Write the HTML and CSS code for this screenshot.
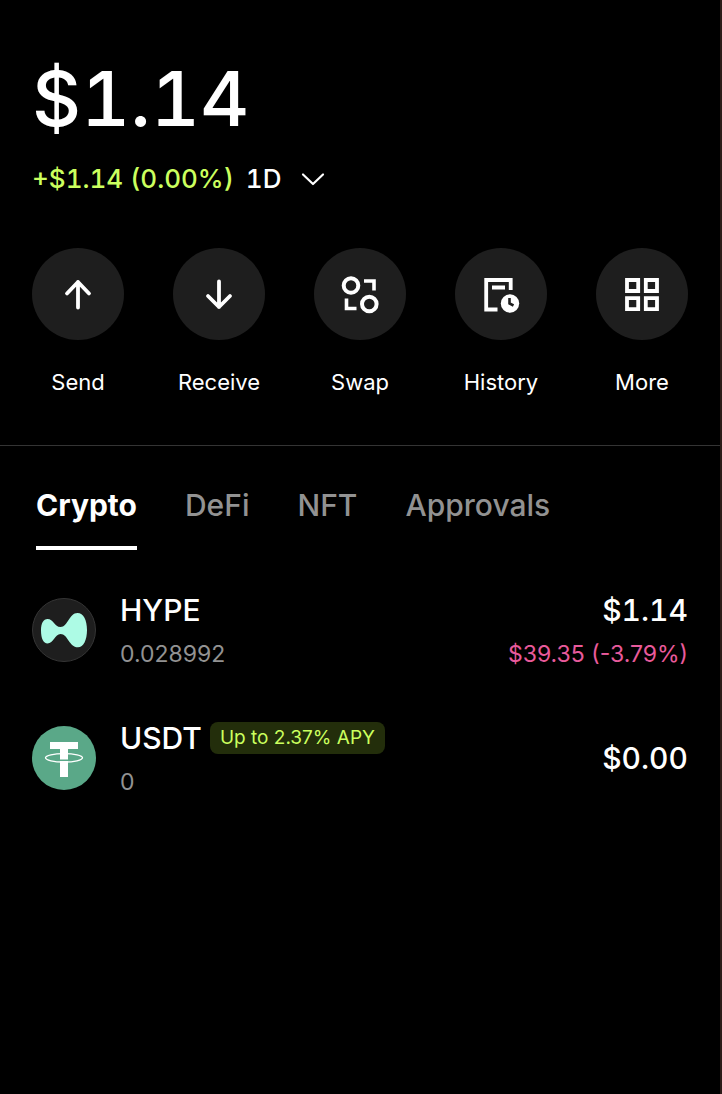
FILE: index.html
```html
<!DOCTYPE html>
<html lang="en">

<head>
    <meta charset="UTF-8">
    <meta name="viewport" content="width=device-width, initial-scale=1.0">
    <title>Wallet</title>
    <link rel="stylesheet" href="styles.css">
</head>

<body>
    <main class="wallet">
        <!--balance-->
        <section class="balance">
            <h1 class="total">$1.14</h1>
            <div class="change">
                <span class="change-value">+$1.14 (0.00%)</span>
                <button type="button" class="period">
                    1D
                    <svg width="24" height="24" viewBox="0 0 24 24" fill="none" stroke="currentColor" stroke-width="2.200" stroke-linecap="round" stroke-linejoin="round" aria-hidden="true">
                        <path d="M2 7.500l10 9.500 10-9.500" />
                    </svg>
                </button>
            </div>
        </section>

        <!--actions-->
        <nav class="actions">
            <button type="button" class="action">
                <span class="circle">
                    <svg width="40" height="40" viewBox="0 0 40 40" fill="none" stroke="currentColor" stroke-width="3.800" stroke-linecap="round" stroke-linejoin="round" aria-hidden="true">
                        <path d="M20 33.500V8M9 19.500L20 8l11 11.500" />
                    </svg>
                </span>
                <span>Send</span>
            </button>
            <button type="button" class="action">
                <span class="circle">
                    <svg width="40" height="40" viewBox="0 0 40 40" fill="none" stroke="currentColor" stroke-width="3.800" stroke-linecap="round" stroke-linejoin="round" aria-hidden="true">
                        <path d="M20 7.500V33M9 22l11 11 11-11" />
                    </svg>
                </span>
                <span>Receive</span>
            </button>
            <button type="button" class="action">
                <span class="circle">
                    <svg width="40" height="40" viewBox="0 0 40 40" fill="none" stroke="currentColor" stroke-width="4" aria-hidden="true">
                        <circle cx="11" cy="11.500" r="7.300" />
                        <circle cx="29.300" cy="30" r="7.300" />
                        <path d="M24 7h10v9.500M6.500 24.500V34.500h10" stroke-width="3.600" />
                    </svg>
                </span>
                <span>Swap</span>
            </button>
            <button type="button" class="action">
                <span class="circle">
                    <svg width="40" height="40" viewBox="0 0 40 40" fill="none" stroke="currentColor" stroke-width="4" aria-hidden="true">
                        <path d="M16.500 35.500H5.200V6h24.500v10M11 13.500h13" stroke-width="3.800" />
                        <circle cx="29" cy="29.500" r="9.200" fill="currentColor" stroke="none" />
                        <path d="M28.500 24v5.500l4 2" stroke="#1e1e1e" stroke-width="2.600" />
                    </svg>
                </span>
                <span>History</span>
            </button>
            <button type="button" class="action">
                <span class="circle">
                    <svg width="40" height="40" viewBox="0 0 40 40" fill="none" stroke="currentColor" stroke-width="3.800" aria-hidden="true">
                        <path d="M5 6h11.200v11H5zM23.800 6H35v11H23.800zM5 24.200h11.200v11H5zM23.800 24.200H35v11H23.800z" />
                    </svg>
                </span>
                <span>More</span>
            </button>
        </nav>

        <!--tabs-->
        <div class="tabs" role="tablist">
            <button type="button" class="tab active" role="tab" aria-selected="true">Crypto</button>
            <button type="button" class="tab" role="tab" aria-selected="false">DeFi</button>
            <button type="button" class="tab" role="tab" aria-selected="false">NFT</button>
            <button type="button" class="tab" role="tab" aria-selected="false">Approvals</button>
        </div>

        <!--token list-->
        <ul class="tokens">
            <li class="token">
                <svg class="logo" viewBox="0 0 64 64" aria-hidden="true">
                    <circle cx="32" cy="32" r="31.500" fill="#1e1e1e" stroke="#353535" />
                    <path fill="#adfbe5" d="M9 32.500C9 25 11.500 21 15.500 21C21.500 21 22.500 29 28.500 29C36 29 37 15 45.500 15C51.500 15 55 22 55 32C55 42 51.500 49.300 46 49.300C37 49.300 36 36 28.500 36C23 36 21.500 45.500 15.500 45.500C11.500 45.500 9 40.500 9 32.500Z" />
                </svg>
                <div class="info">
                    <div class="name">HYPE</div>
                    <div class="amount">0.028992</div>
                </div>
                <div class="value">
                    <div class="name">$1.14</div>
                    <div class="amount down">$39.35 (-3.79%)</div>
                </div>
            </li>
            <li class="token">
                <svg class="logo" viewBox="0 0 64 64" aria-hidden="true">
                    <circle cx="32" cy="32" r="32" fill="#5aa888" />
                    <path fill="#fff" d="M18 16h28v7H36v10.500h-8V23H18zM28 35h8v16h-8z" />
                    <ellipse cx="32" cy="31.800" rx="18.500" ry="4.200" fill="none" stroke="#fff" stroke-width="1.300" />
                </svg>
                <div class="info">
                    <div class="name">USDT <span class="apy">Up to 2.37% APY</span></div>
                    <div class="amount">0</div>
                </div>
                <div class="value">
                    <div class="name">$0.00</div>
                </div>
            </li>
        </ul>
    </main>
</body>

</html>
```
FILE: styles.css
```css
* {
    box-sizing: border-box;
}

body {
    margin: 0;
    background-color: #000;
    color: #fff;
    font-family: Inter, "Liberation Sans", sans-serif;
    font-variant-numeric: tabular-nums;
}

button {
    padding: 0;
    border: 0;
    background: none;
    color: inherit;
    font: inherit;
    cursor: pointer;
}

svg {
    display: block;
    flex: none;
}

.wallet {
    min-height: 100vh;
    border-right: 2px solid #2b1b18;
}

.balance {
    padding: 50px 32px 0;
}

.total {
    margin: 0;
    font-size: 76px;
    line-height: 96px;
    font-weight: 500;
}

.change {
    display: flex;
    align-items: center;
    gap: 12px;
    margin-top: 16px;
    font-size: 26px;
    line-height: 34px;
    font-weight: 500;
}

.change-value {
    color: #cbff5e;
}

.period {
    display: flex;
    align-items: center;
    gap: 20px;
}

.actions {
    display: flex;
    justify-content: space-between;
    padding: 52px 32px 47px;
    border-bottom: 1px solid #343434;
}

.action {
    display: flex;
    flex-direction: column;
    align-items: center;
    gap: 26px;
    width: 92px;
    font-size: 22px;
    line-height: 32px;
}

.circle {
    display: flex;
    align-items: center;
    justify-content: center;
    width: 92px;
    height: 92px;
    border-radius: 50%;
    background-color: #1e1e1e;
}

.tabs {
    display: flex;
    gap: 48px;
    padding: 39px 36px 0;
    font-size: 30px;
    line-height: 40px;
    font-weight: 500;
}

.tab {
    padding-bottom: 21px;
    border-bottom: 4px solid transparent;
    color: #929292;
}

.tab.active {
    border-color: #fff;
    color: #fff;
    font-weight: 700;
}

.tokens {
    margin: 0;
    padding: 16px 32px;
    list-style: none;
}

.token {
    display: flex;
    align-items: center;
    gap: 24px;
    height: 128px;
}

.logo {
    width: 64px;
    height: 64px;
}

.info {
    flex: 1;
}

.name {
    display: flex;
    align-items: center;
    gap: 8px;
    font-size: 30px;
    line-height: 48px;
    font-weight: 500;
}

.amount {
    color: #929292;
    font-size: 23px;
    line-height: 40px;
    font-variant-numeric: normal;
}

.value .name {
    justify-content: flex-end;
}

.amount.down {
    color: #e85a9b;
}

/*yield badge next to the token name*/
.apy {
    padding: 0 10px;
    border-radius: 8px;
    background-color: #232e0b;
    color: #cbff5e;
    font-size: 19px;
    line-height: 32px;
    font-weight: 400;
    font-variant-numeric: normal;
}
```
